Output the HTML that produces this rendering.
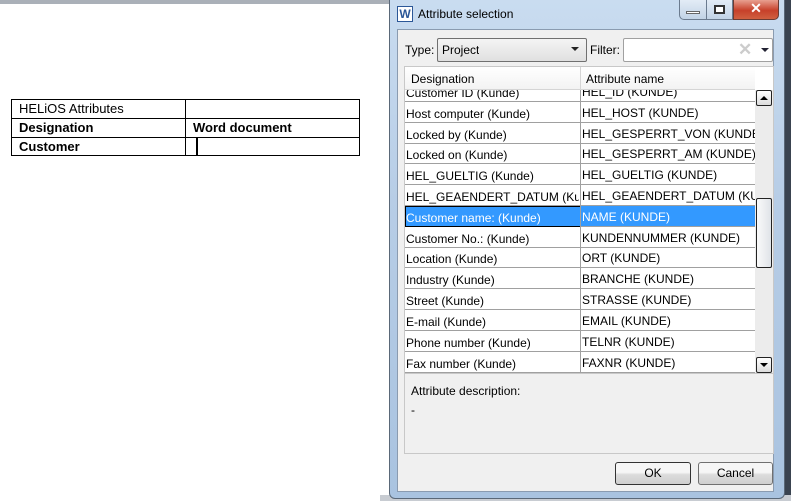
<!DOCTYPE html>
<html><head><style>
*{margin:0;padding:0;box-sizing:border-box}
body{width:791px;height:501px;overflow:hidden;background:#fff;position:relative;font-family:"Liberation Sans",sans-serif;font-size:12px;color:#000}
.a{position:absolute}
.t{font-size:12px;white-space:nowrap;overflow:hidden}
.r{position:absolute;left:0;width:350px;height:21px;border-bottom:1px solid #a0a0a0}
.r .d{position:absolute;left:1px;top:5px;width:173px;white-space:nowrap;overflow:hidden}
.r .n{position:absolute;left:177px;top:4px;width:173px;white-space:nowrap;overflow:hidden}
.s{background:#3399ff;color:#fff}
</style></head><body>
<div class="a" style="left:0;top:0;width:791px;height:4px;background:#aab0b8"></div>
<div class="a" style="left:11px;top:99px;width:349px;height:57px;border:1px solid #000"></div>
<div class="a" style="left:11px;top:118px;width:349px;height:1px;background:#000"></div>
<div class="a" style="left:11px;top:137px;width:349px;height:1px;background:#000"></div>
<div class="a" style="left:185px;top:99px;width:1px;height:57px;background:#000"></div>
<div class="a" style="left:196px;top:138px;width:2px;height:17px;background:#000"></div>
<div class="a t" style="left:19px;top:101px;font-size:13px">HELiOS Attributes</div>
<div class="a t" style="left:19px;top:120px;font-size:13px;font-weight:bold">Designation</div>
<div class="a t" style="left:193px;top:120px;font-size:13px;font-weight:bold">Word document</div>
<div class="a t" style="left:19px;top:139px;font-size:13px;font-weight:bold">Customer</div>
<div class="a" style="left:784px;top:0;width:7px;height:501px;background:#3a4350"></div>
<div class="a" style="left:380px;top:495px;width:411px;height:6px;background:#c8ccd2"></div>
<div class="a" style="left:389px;top:0;width:396px;height:499px;background:linear-gradient(#c9dcf0,#b7cde6 40%,#a9c3e0);border:1px solid #5a6878;border-top:none;border-radius:0 0 6px 6px"></div>
<div class="a" style="left:397px;top:6px;width:16px;height:16px;background:#fff;border:1px solid #2b5797;color:#2b5797;font-weight:bold;font-size:12px;text-align:center;line-height:14px">W</div>
<div class="a t" style="left:418px;top:7px;font-size:12px">Attribute selection</div>
<div class="a" style="left:679px;top:0;width:28px;height:20px;background:linear-gradient(#e3ecf6,#c2d3e6);border:1px solid #6b7b8f;border-top:none;border-radius:0 0 0 5px"></div>
<div class="a" style="left:686px;top:11px;width:14px;height:3px;background:#fff;border:1px solid #666"></div>
<div class="a" style="left:707px;top:0;width:26px;height:20px;background:linear-gradient(#e3ecf6,#c2d3e6);border:1px solid #6b7b8f;border-top:none;border-left:none"></div>
<div class="a" style="left:714px;top:5px;width:11px;height:9px;border:2px solid #333;background:#fff"></div>
<div class="a" style="left:733px;top:0;width:46px;height:20px;background:linear-gradient(#e8a090,#c7402a 55%,#d06040);border:1px solid #6b3b33;border-top:none;border-radius:0 0 5px 0;color:#fff;font-weight:bold;font-size:14px;text-align:center;line-height:17px">✕</div>
<div class="a" style="left:397px;top:29px;width:377px;height:463px;background:#f0f0f0;border:1px solid #8a9bb0"></div>
<div class="a t" style="left:405px;top:43px">Type:</div>
<div class="a" style="left:437px;top:38px;width:150px;height:24px;border:1px solid #707070;border-radius:2px;background:linear-gradient(#f4f4f4,#e0e0e0)"></div>
<div class="a t" style="left:442px;top:43px">Project</div>
<div class="a" style="left:571px;top:47px;width:0;height:0;border-left:4px solid transparent;border-right:4px solid transparent;border-top:4px solid #222"></div>
<div class="a t" style="left:590px;top:43px">Filter:</div>
<div class="a" style="left:623px;top:38px;width:150px;height:24px;border:1px solid #a0a0a0;border-radius:2px;background:#fff"></div>
<div class="a" style="left:738px;top:40px;color:#ccc;font-size:17px;font-weight:bold">✕</div>
<div class="a" style="left:761px;top:48px;width:0;height:0;border-left:4px solid transparent;border-right:4px solid transparent;border-top:4px solid #223"></div>
<div class="a" style="left:404px;top:66px;width:370px;height:307px;background:#fff;border:1px solid #c8c8c8"></div>
<div class="a" style="left:405px;top:67px;width:350px;height:23px;background:linear-gradient(#fff,#f3f3f3);border-bottom:1px solid #d5d5d5"></div>
<div class="a" style="left:580px;top:67px;width:1px;height:23px;background:#d5d5d5"></div>
<div class="a t" style="left:411px;top:72px">Designation</div>
<div class="a t" style="left:586px;top:72px">Attribute name</div>
<div class="a" style="left:405px;top:90px;width:350px;height:283px;overflow:hidden">
<div class="r" style="top:-9px"><div class="d">Customer ID (Kunde)</div><div class="n">HEL_ID (KUNDE)</div></div>
<div class="r" style="top:12px"><div class="d">Host computer (Kunde)</div><div class="n">HEL_HOST (KUNDE)</div></div>
<div class="r" style="top:33px"><div class="d">Locked by (Kunde)</div><div class="n">HEL_GESPERRT_VON (KUNDE)</div></div>
<div class="r" style="top:53px"><div class="d">Locked on (Kunde)</div><div class="n">HEL_GESPERRT_AM (KUNDE)</div></div>
<div class="r" style="top:74px"><div class="d">HEL_GUELTIG (Kunde)</div><div class="n">HEL_GUELTIG (KUNDE)</div></div>
<div class="r" style="top:95px"><div class="d">HEL_GEAENDERT_DATUM (Kunde)</div><div class="n">HEL_GEAENDERT_DATUM (KUNDE)</div></div>
<div class="r s" style="top:116px"><div style="position:absolute;left:0;top:0;width:176px;height:21px;border:1px solid #000"></div><div class="d">Customer name: (Kunde)</div><div class="n">NAME (KUNDE)</div></div>
<div class="r" style="top:137px"><div class="d">Customer No.: (Kunde)</div><div class="n">KUNDENNUMMER (KUNDE)</div></div>
<div class="r" style="top:157px"><div class="d">Location (Kunde)</div><div class="n">ORT (KUNDE)</div></div>
<div class="r" style="top:178px"><div class="d">Industry (Kunde)</div><div class="n">BRANCHE (KUNDE)</div></div>
<div class="r" style="top:199px"><div class="d">Street (Kunde)</div><div class="n">STRASSE (KUNDE)</div></div>
<div class="r" style="top:220px"><div class="d">E-mail (Kunde)</div><div class="n">EMAIL (KUNDE)</div></div>
<div class="r" style="top:241px"><div class="d">Phone number (Kunde)</div><div class="n">TELNR (KUNDE)</div></div>
<div class="r" style="top:262px"><div class="d">Fax number (Kunde)</div><div class="n">FAXNR (KUNDE)</div></div>
<div style="position:absolute;left:175px;top:0;width:1px;height:283px;background:#a0a0a0"></div>
</div>
<div class="a" style="left:755px;top:90px;width:18px;height:283px;background:#ececec"></div>
<div class="a" style="left:756px;top:90px;width:16px;height:16px;border:1px solid #222;border-radius:2px;background:linear-gradient(#fff,#dcdcdc)"></div>
<div class="a" style="left:760px;top:96px;border-left:4px solid transparent;border-right:4px solid transparent;border-bottom:4px solid #000"></div>
<div class="a" style="left:756px;top:198px;width:16px;height:70px;border:1px solid #222;border-radius:2px;background:linear-gradient(90deg,#fafafa,#dfe3e8)"></div>
<div class="a" style="left:756px;top:357px;width:16px;height:16px;border:1px solid #222;border-radius:2px;background:linear-gradient(#fff,#dcdcdc)"></div>
<div class="a" style="left:760px;top:363px;border-left:4px solid transparent;border-right:4px solid transparent;border-top:4px solid #000"></div>
<div class="a" style="left:404px;top:373px;width:370px;height:81px;border:1px solid #c8c8c8;background:#f0f0f0"></div>
<div class="a t" style="left:411px;top:384px">Attribute description:</div>
<div class="a t" style="left:411px;top:403px">-</div>
<div class="a" style="left:615px;top:462px;width:76px;height:23px;border:1px solid #333;border-radius:3px;background:linear-gradient(#f6f6f6 45%,#dcdcdc 55%,#cfcfcf);text-align:center;line-height:21px">OK</div>
<div class="a" style="left:698px;top:462px;width:75px;height:23px;border:1px solid #707070;border-radius:3px;background:linear-gradient(#f6f6f6 45%,#dcdcdc 55%,#cfcfcf);text-align:center;line-height:21px">Cancel</div>
</body></html>
